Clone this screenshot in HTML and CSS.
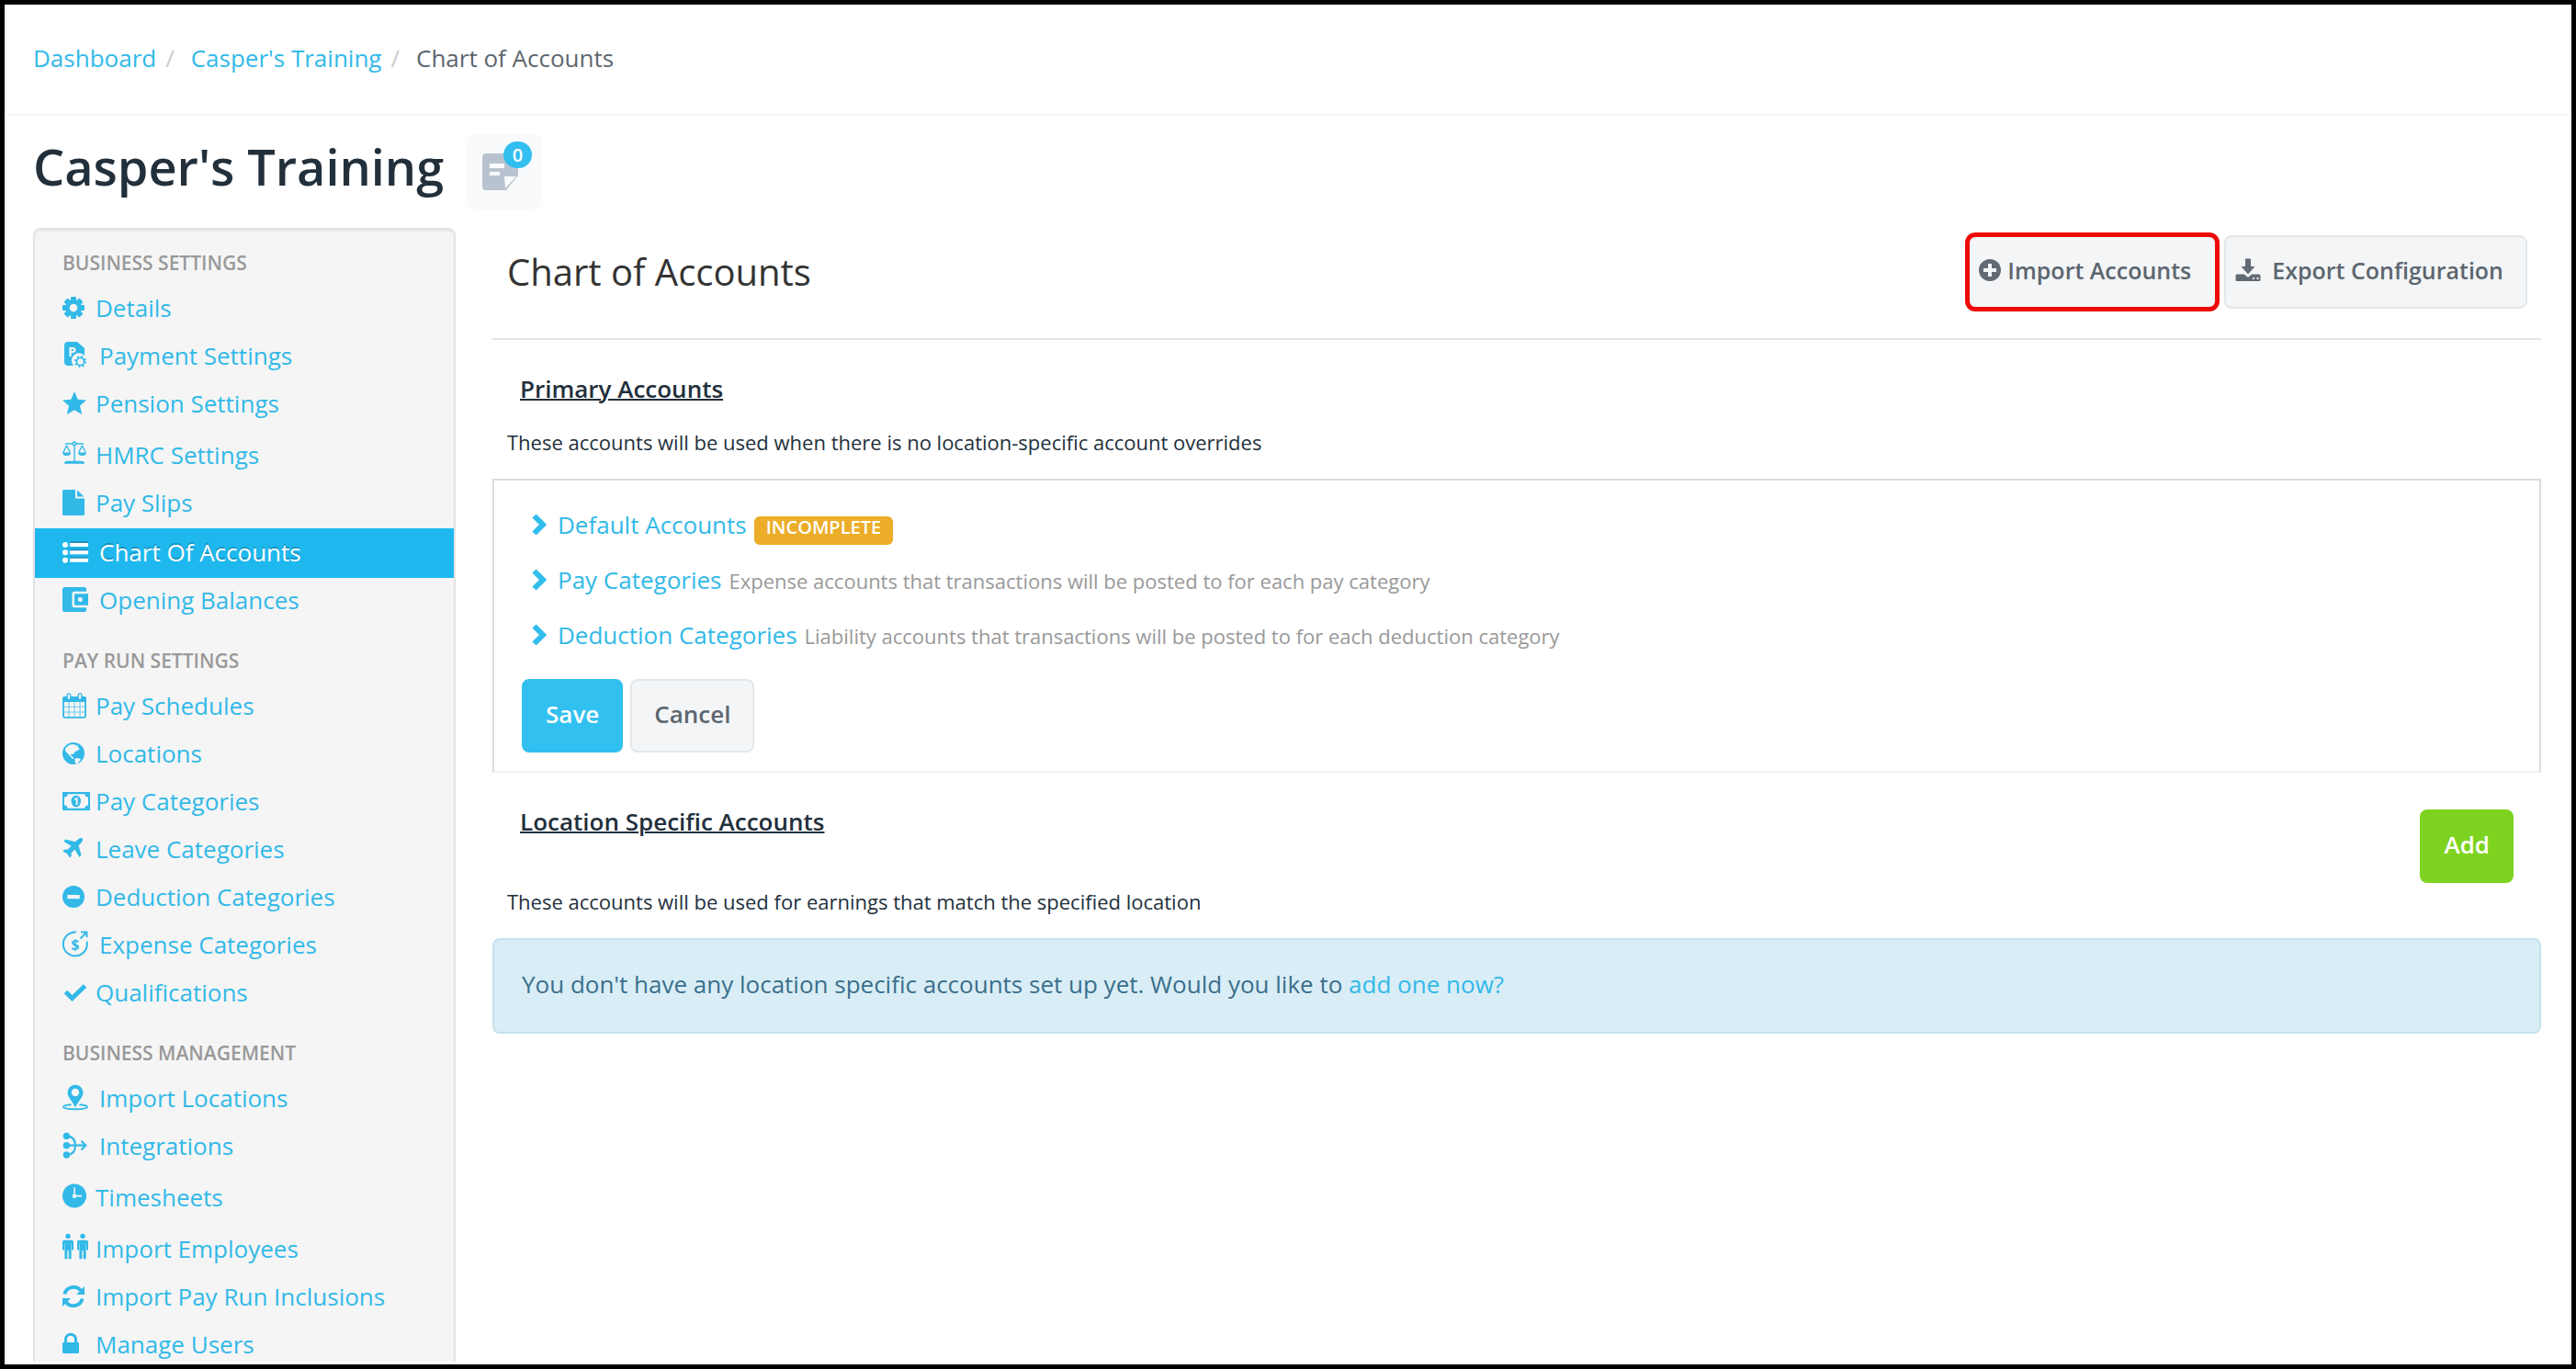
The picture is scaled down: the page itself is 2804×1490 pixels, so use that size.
FILE: index.html
```html
<!DOCTYPE html>
<html lang="en">
<head>
  <meta charset="UTF-8">
  <meta name="viewport" content="width=device-width, initial-scale=1.0">
  <title>Chart of Accounts</title>
  <link rel="stylesheet" href="styles.css">
</head>
<body>
  <div class="page">
    <!-- Breadcrumb -->
    <nav class="topbar" aria-label="Breadcrumb">
      <ol class="breadcrumb">
        <li><a href="#">Dashboard</a></li>
        <li><a href="#">Casper's Training</a></li>
        <li>Chart of Accounts</li>
      </ol>
    </nav>

    <div class="title-row">
      <h1>Casper's Training</h1>
      <button type="button" class="notes-button" aria-label="Notes">
        <svg width="42" height="40" viewBox="0 0 42 40">
          <path fill="#b9c3cf" d="M4 0H35a4 4 0 0 1 4 4V24L26 40H4a4 4 0 0 1-4-4V4a4 4 0 0 1 4-4z"/>
          <path fill="#f8fafc" d="M8 11h16v5H8zM8 20h11v4H8zM24 25h13L25 38z"/>
        </svg>
        <span class="notes-count">0</span>
      </button>
    </div>

    <div class="layout">
      <!-- Sidebar -->
      <aside class="sidebar">
        <h2 class="sidebar-heading">Business Settings</h2>
        <ul>
          <li><a href="#">
            <svg class="icon" viewBox="0 0 30 30"><g transform="translate(12 15)"><circle r="9"/><rect x="-3" y="-12" width="6" height="24" rx="1"/><rect x="-3" y="-12" width="6" height="24" rx="1" transform="rotate(45)"/><rect x="-3" y="-12" width="6" height="24" rx="1" transform="rotate(90)"/><rect x="-3" y="-12" width="6" height="24" rx="1" transform="rotate(135)"/><circle class="cut" r="4.3"/></g></svg>
            Details</a></li>
          <li><a href="#" class="wide">
            <svg class="icon" viewBox="0 0 30 30"><path d="M6 0H16L24 7V15A8 8 0 0 0 12 26H6a4 4 0 0 1-4-4V4a4 4 0 0 1 4-4z"/><text class="cut" x="6" y="15.500" font-size="14" font-weight="700">P</text><circle cx="19.500" cy="21.500" r="4" fill="none" stroke="currentColor" stroke-width="1.600"/><circle cx="19.500" cy="21.500" r="5.500" fill="none" stroke="currentColor" stroke-width="2" stroke-dasharray="2 2.320"/></svg>
            Payment Settings</a></li>
          <li><a href="#">
            <svg class="icon" viewBox="0 0 30 30"><path d="M13 2l3.700 8.700 9.300.8-7 6.300 2.200 9.200L13 22.200 4.800 27 7 17.800 0 11.500l9.300-.8z"/></svg>
            Pension Settings</a></li>
          <li><a href="#" class="tall">
            <svg class="icon" viewBox="0 0 30 30"><g fill="none" stroke="currentColor" stroke-width="1.400"><path d="M3 3H10.800M15 3H23M4.500 5L.800 12.500M4.500 5L8.300 12.500M21.500 5L17.700 12.500M21.500 5L25.300 12.500M13 5V23"/><circle cx="13" cy="2.800" r="1.800"/></g><path d="M0 12.500h9a4.500 3.500 0 0 1-9 0zM17 12.500h9a4.500 3.500 0 0 1-9 0zM2 24.800q0-3 3-3H21q3 0 3 3z"/></svg>
            HMRC Settings</a></li>
          <li><a href="#">
            <svg class="icon" viewBox="0 0 30 30"><path d="M1.500 1H14V10.500H24V27.500a1.500 1.500 0 0 1-1.500 1.500H1.500A1.500 1.500 0 0 1 0 27.500V2.500A1.500 1.500 0 0 1 1.500 1zM16 1.500L23.500 8.500H16z"/></svg>
            Pay Slips</a></li>
          <li><a href="#" class="wide active">
            <svg class="icon" viewBox="0 0 30 30"><path fill="#1a93bd" d="M8 3h20v3H8zM8 11.500h20v3H8zM8 20h20v3H8z"/><path d="M8 5h20v4H8zM8 13.300h20v4H8zM8 21.700h20v4H8z"/><circle cx="3" cy="7" r="3"/><circle cx="3" cy="15.300" r="3"/><circle cx="3" cy="23.700" r="3"/></svg>
            Chart Of Accounts</a></li>
          <li><a href="#" class="wide">
            <svg class="icon" viewBox="0 0 30 30"><rect y="1" width="26" height="27" rx="2.500"/><path class="cut" d="M13 5.700H30V23.300H13a2.500 2.500 0 0 1-2.500-2.500V8.200a2.500 2.500 0 0 1 2.500-2.500z"/><path d="M14 8.200H28V20.800H14a1 1 0 0 1-1-1V9.200a1 1 0 0 1 1-1z"/><circle class="cut" cx="19.300" cy="14.400" r="2.500"/></svg>
            Opening Balances</a></li>
        </ul>

        <h2 class="sidebar-heading">Pay Run Settings</h2>
        <ul>
          <li><a href="#">
            <svg class="icon" viewBox="0 0 30 30"><path fill="none" stroke="currentColor" stroke-width="1.800" d="M1 7V26.500a1.300 1.300 0 0 0 1.300 1.300H23.700A1.300 1.300 0 0 0 25 26.500V7"/><path d="M0 11V7a2 2 0 0 1 2-2H24a2 2 0 0 1 2 2v4z"/><path fill="none" stroke="currentColor" stroke-width="1" opacity=".7" d="M7 11V28M13 11V28M19 11V28M1 16.300H25M1 22H25"/><g stroke="currentColor" stroke-width="1.300"><rect class="cut" x="5.200" y="1.800" width="3.600" height="6.800" rx="1.800"/><rect class="cut" x="17.200" y="1.800" width="3.600" height="6.800" rx="1.800"/></g></svg>
            Pay Schedules</a></li>
          <li><a href="#">
            <svg class="icon" viewBox="0 0 30 30"><circle cx="12" cy="15" r="12"/><path class="cut" d="M4 8.500L8 5.500 13 5l1 1.500 3-.5-1 2 3 1.500-2.500 2.500-3 1-1.500 3-2-.5-1 1.500 2.500 2 1 2.500-2-1-3-3.500L3.500 13 2.800 10.500zM13.500 20.500l3.500-.5 3 1.500-3.500 4.500-2.500.8z"/></svg>
            Locations</a></li>
          <li><a href="#">
            <svg class="icon" viewBox="0 0 30 30"><rect y="5" width="30" height="20" rx=".500"/><path class="cut" d="M5.500 7.200H24.500A3.300 3.300 0 0 0 28 10.500V19.500A3.300 3.300 0 0 0 24.500 22.800H5.500A3.300 3.300 0 0 0 2 19.500V10.500A3.300 3.300 0 0 0 5.500 7.200z"/><ellipse cx="14.800" cy="15" rx="5.200" ry="6.300"/><text class="cut" x="14.800" y="19" font-size="11" font-weight="700" text-anchor="middle">1</text></svg>
            Pay Categories</a></li>
          <li><a href="#">
            <svg class="icon" viewBox="0 0 30 30"><path d="M21.500 3.500c1.200 1.200.3 3.300-1 4.700L17.500 11.200 20.500 21.500 18.500 24 13.500 15.500 9.500 19.500 9.800 22.500 8 24.800 5.300 20.200.300 17.500 2.500 15.500 5.500 15.800 9.500 11.800 1.200 6.800 3.500 4.500 13.800 7.300 17 4.500C18.500 3 20.500 2.500 21.500 3.500z"/></svg>
            Leave Categories</a></li>
          <li><a href="#">
            <svg class="icon" viewBox="0 0 30 30"><circle cx="12" cy="15" r="12"/><rect class="cut" x="5.300" y="13" width="13.400" height="4.200"/></svg>
            Deduction Categories</a></li>
          <li><a href="#" class="wide">
            <svg class="icon" viewBox="0 0 30 30"><path fill="none" stroke="currentColor" stroke-width="2" d="M15 1.500A13 13 0 1 0 26.500 11.500M19.500 8.500L26 2M20 1.500H26.500V7"/><text x="13.800" y="20.500" font-size="16" font-weight="700" text-anchor="middle">$</text></svg>
            Expense Categories</a></li>
          <li><a href="#">
            <svg class="icon" viewBox="0 0 30 30"><path fill="none" stroke="currentColor" stroke-width="5" d="M3.500 14.500L10.500 21.500 24.500 8"/></svg>
            Qualifications</a></li>
        </ul>

        <h2 class="sidebar-heading">Business Management</h2>
        <ul>
          <li><a href="#" class="wide">
            <svg class="icon" viewBox="0 0 30 30"><path fill="none" stroke="currentColor" stroke-width="2" d="M9.500 22.300C4 22.700 1 23.500 1 24.800c0 3.300 26 3.300 26 0 0-1.300-3-2.100-8.500-2.500"/><path d="M14 .700a8.500 8.500 0 0 1 8.500 8.500C22.500 14 16.500 19.500 14 25.300 11.500 19.500 5.500 14 5.500 9.200A8.500 8.500 0 0 1 14 .700z"/><circle class="cut" cx="14" cy="9" r="4.200"/></svg>
            Import Locations</a></li>
          <li><a href="#" class="wide">
            <svg class="icon" viewBox="0 0 30 30"><circle cx="4.400" cy="4.400" r="3.700"/><circle cx="4.400" cy="14.700" r="3.700"/><circle cx="4.400" cy="25" r="3.700"/><path fill="none" stroke="currentColor" stroke-width="2.200" d="M5 4.400C11 5 14 9 14 14.700S11 24.500 5 25M5 14.700H25M20.500 9.800L25.300 14.700 20.500 19.600"/></svg>
            Integrations</a></li>
          <li><a href="#" class="tall">
            <svg class="icon" viewBox="0 0 30 30"><circle cx="13" cy="13.500" r="13"/><path class="cut" d="M12.200 4.500h1.600V12.800H21v1.700H12.200z"/><circle class="cut" cx="13" cy="13.700" r="2.300"/></svg>
            Timesheets</a></li>
          <li><a href="#" class="tall">
            <svg class="icon" viewBox="0 0 30 30"><g id="person"><circle cx="6" cy="1.400" r="2.700"/><path d="M2 5.800H10a2 2 0 0 1 2 2V16.500H10V9.500H9.600V26.300H6.700V17H5.300V26.300H2.400V9.500H2V16.500H0V7.800a2 2 0 0 1 2-2z"/></g><use href="#person" x="16"/></svg>
            Import Employees</a></li>
          <li><a href="#">
            <svg class="icon" viewBox="0 0 30 30"><path fill="none" stroke="currentColor" stroke-width="3.800" d="M2.300 12.500A10.200 10.200 0 0 1 20 8.500M21.700 17.500A10.200 10.200 0 0 1 4 21.500"/><path d="M24 4V13H15zM0 26V17H9z"/></svg>
            Import Pay Run Inclusions</a></li>
          <li><a href="#">
            <svg class="icon" viewBox="0 0 30 30"><rect y="13" width="18" height="12" rx="1.300"/><path fill="none" stroke="currentColor" stroke-width="3" d="M3.500 14V9.800a5.500 5.500 0 0 1 11 0V14"/></svg>
            Manage Users</a></li>
        </ul>
      </aside>

      <!-- Content -->
      <main class="content">
        <div class="content-header">
          <h2>Chart of Accounts</h2>
          <div class="button-row">
            <button type="button" class="btn btn-icon btn-highlight">
              <svg width="24" height="24" viewBox="0 0 24 24"><circle cx="12" cy="12" r="12" fill="#626b73"/><path fill="#f3f5f7" d="M10 5h4v5h5v4h-5v5h-4v-5H5v-4h5z"/></svg>
              Import Accounts
            </button>
            <button type="button" class="btn btn-icon btn-export">
              <svg width="28" height="26" viewBox="0 0 28 26"><path fill="#626b73" d="M11 1.500a1 1 0 0 1 1-1h4a1 1 0 0 1 1 1V9h4.500L14 17.500 6.500 9H11zM2 17.500H10L14 21l4-3.500h8a1.500 1.500 0 0 1 1.500 1.500v4.500A1.500 1.500 0 0 1 26 25H2a1.500 1.500 0 0 1-1.500-1.500V19A1.500 1.500 0 0 1 2 17.500z"/><path fill="#f3f5f7" d="M19 21h2v2h-2zM23.500 21h2v2h-2z"/></svg>
              Export Configuration
            </button>
          </div>
        </div>

        <section>
          <div class="section-head">
            <h3>Primary Accounts</h3>
          </div>
          <p class="hint">These accounts will be used when there is no location-specific account overrides</p>
          <div class="panel">
            <ul class="account-list">
              <li>
                <svg class="chevron" viewBox="0 0 16 24"><path d="M2.500 2.500L12 12 2.500 21.500"/></svg>
                <a href="#">Default Accounts</a>
                <span class="badge">INCOMPLETE</span>
              </li>
              <li>
                <svg class="chevron" viewBox="0 0 16 24"><path d="M2.500 2.500L12 12 2.500 21.500"/></svg>
                <a href="#">Pay Categories</a>
                <small>Expense accounts that transactions will be posted to for each pay category</small>
              </li>
              <li>
                <svg class="chevron" viewBox="0 0 16 24"><path d="M2.500 2.500L12 12 2.500 21.500"/></svg>
                <a href="#">Deduction Categories</a>
                <small>Liability accounts that transactions will be posted to for each deduction category</small>
              </li>
            </ul>
            <div class="button-row">
              <button type="button" class="btn btn-primary">Save</button>
              <button type="button" class="btn">Cancel</button>
            </div>
          </div>
        </section>

        <section>
          <div class="section-head with-action">
            <h3>Location Specific Accounts</h3>
            <button type="button" class="btn btn-success">Add</button>
          </div>
          <p class="hint">These accounts will be used for earnings that match the specified location</p>
          <div class="alert">You don't have any location specific accounts set up yet. Would you like to <a href="#">add one now?</a></div>
        </section>
      </main>
    </div>
  </div>
</body>
</html>
```
FILE: styles.css
```css
* {
  box-sizing: border-box;
}
body {
  margin: 0;
  height: 100vh;
  padding: 3px;
  border: 5px solid #000;
  overflow: hidden;
  background: #fff;
  color: #22303c;
  font-family: "Open Sans", "Noto Sans", sans-serif;
  font-size: 26px;
  line-height: 36px;
}
h1, h2, h3, p, ul, ol {
  margin: 0;
  padding: 0;
}
ul, ol {
  list-style: none;
}
a {
  color: #32b9e8;
  text-decoration: none;
}
a:hover {
  text-decoration: underline;
}
.page {
  height: 100%;
  overflow: hidden;
}

/* Header */
.topbar {
  padding: 37px 28px 43px;
  border-bottom: 2px solid #f3f4f4;
}
.breadcrumb {
  display: flex;
  color: #5d666e;
}
.breadcrumb li + li::before {
  content: "/";
  padding: 0 18px 0 10px;
  color: #ccc;
}
.title-row {
  display: flex;
  gap: 24px;
  padding: 20px 28px;
}
h1 {
  font-size: 54px;
  font-weight: 600;
  line-height: 70px;
}
.notes-button {
  position: relative;
  width: 84px;
  height: 82px;
  padding: 17px 18px;
  border: none;
  border-radius: 10px;
  background: #f8fafc;
  cursor: pointer;
}
.notes-button svg {
  display: block;
}
.notes-count {
  position: absolute;
  top: 8px;
  right: 12px;
  padding: 0 10px;
  border-radius: 15px;
  background: #32bfef;
  color: #fff;
  font: 600 20px/29px "Open Sans", sans-serif;
}
.layout {
  display: flex;
  align-items: flex-start;
  gap: 40px;
  padding: 0 30px 0 28px;
}

/* Sidebar */
.sidebar {
  flex: 0 0 460px;
  border: 2px solid #e3e3e3;
  border-radius: 8px;
  background: #f5f5f5;
  box-shadow: inset 0 2px 2px rgba(0, 0, 0, 0.05);
}
.sidebar-heading {
  padding: 24px 30px 11px;
  color: #999;
  font-size: 21px;
  font-weight: 600;
  line-height: 28px;
  text-transform: uppercase;
}
.sidebar-heading:first-child {
  padding-top: 22px;
}
.sidebar li a {
  display: flex;
  align-items: center;
  gap: 6px;
  padding: 6px 30px 10px;
}
.sidebar li .wide {
  gap: 10px;
}
.sidebar li .tall {
  padding-top: 10px;
}
.sidebar li .active {
  padding-top: 8px;
  background: #1eb8ee;
  color: #fff;
  text-shadow: 0 -2px 0 rgba(0, 0, 0, 0.2);
}
.icon {
  flex: none;
  width: 30px;
  height: 30px;
  overflow: visible;
  fill: currentColor;
}
.icon .cut {
  fill: #f5f5f5;
}

/* Content */
.content {
  flex: 1;
  min-width: 0;
}
.content-header {
  display: flex;
  align-items: center;
  justify-content: space-between;
  padding: 8px 15px 32px 16px;
  border-bottom: 2px solid #e3e3e3;
}
.content-header h2 {
  color: #333;
  font-size: 40px;
  font-weight: 400;
  line-height: 72px;
}
.button-row {
  display: flex;
  gap: 8px;
}
.btn {
  padding: 20px 24px 24px;
  border: 2px solid #e4e7ea;
  border-radius: 8px;
  background: #f3f5f7;
  color: #5d666e;
  font-family: inherit;
  font-size: 26px;
  font-weight: 600;
  line-height: 32px;
  cursor: pointer;
}
.btn-icon {
  display: flex;
  align-items: center;
  gap: 7px;
  padding-left: 10px;
  font-size: 25px;
}
.btn-export {
  gap: 12px;
}
.btn-highlight {
  padding-right: 26px;
  border-color: #ee0a0a;
  box-shadow: 0 0 0 3px #ee0a0a;
}
.btn-primary {
  border-color: #32c0f0;
  background: #32c0f0;
  color: #fff;
}
.btn-success {
  border-color: #7ed321;
  background: #7ed321;
  color: #fff;
}
.section-head {
  padding: 35px 30px 24px;
}
.section-head.with-action {
  display: flex;
  align-items: flex-start;
  justify-content: space-between;
  padding-bottom: 4px;
}
.with-action .btn {
  margin-top: 5px;
}
h3 {
  font-size: 26px;
  font-weight: 600;
  text-decoration: underline;
  text-decoration-thickness: 2px;
}
.hint {
  padding: 0 16px 24px;
  font-size: 22px;
  line-height: 32px;
}
.panel {
  padding: 30px 30px 20px;
  border: 2px solid #dcdcdc;
  border-bottom-color: #f3f3f3;
}
.account-list {
  display: grid;
  gap: 24px;
  padding: 0 11px 30px;
}
.account-list li {
  display: flex;
  align-items: baseline;
  gap: 8px;
  height: 36px;
}
.account-list small {
  color: #999;
  font-size: 22px;
}
.chevron {
  align-self: center;
  width: 16px;
  height: 24px;
  margin-right: 4px;
  fill: none;
  stroke: #32bdec;
  stroke-width: 6;
}
.badge {
  padding: 0 13px 7px;
  border-radius: 6px;
  background: #ecad28;
  color: #fff;
  font-size: 20px;
  font-weight: 600;
  line-height: 24px;
}
.alert {
  padding: 30px 30px 34px;
  border: 2px solid #c3e4ea;
  border-radius: 8px;
  background: #d9edf6;
  color: #3a6f8c;
}
```
